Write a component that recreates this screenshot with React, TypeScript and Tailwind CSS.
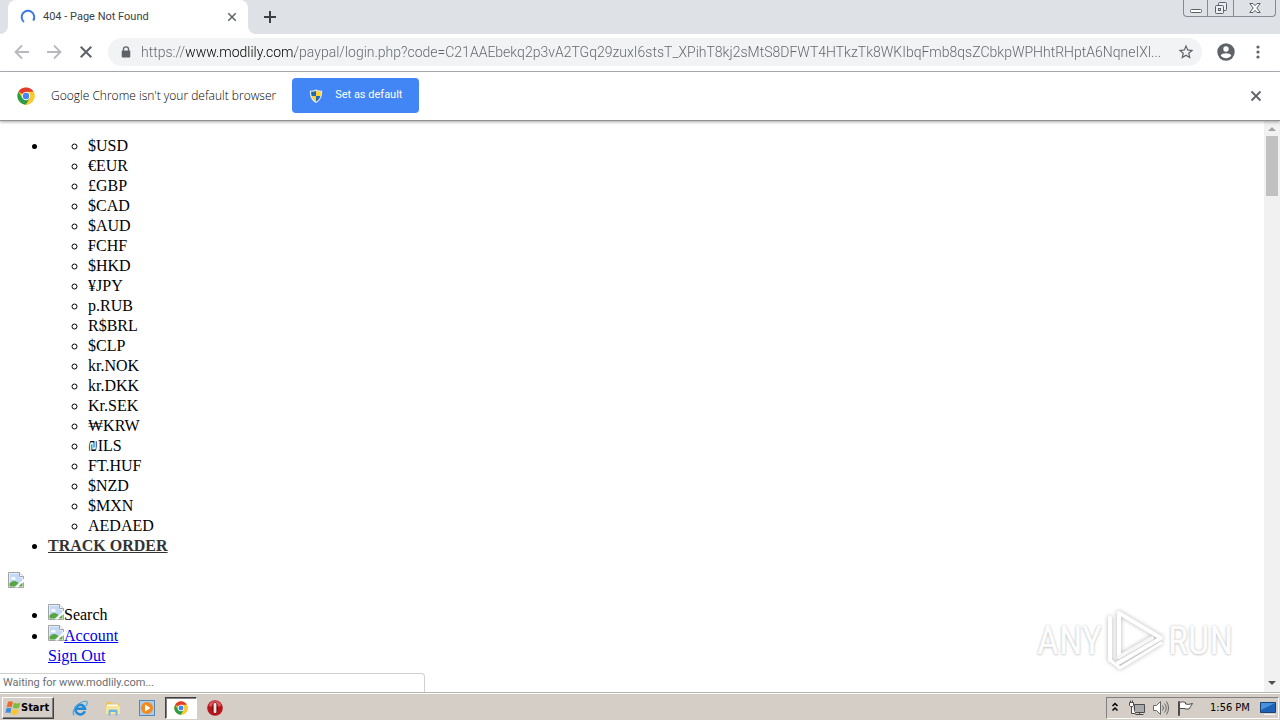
import React from "react";

const currencies = [
  "$USD", "€EUR", "£GBP", "$CAD", "$AUD", "₣CHF", "$HKD", "¥JPY", "p.RUB", "R$BRL",
  "$CLP", "kr.NOK", "kr.DKK", "Kr.SEK", "₩KRW", "₪ILS", "FT.HUF", "$NZD", "$MXN", "AEDAED",
];

const address =
  "https://www.modlily.com/paypal/login.php?code=C21AAEbekq2p3vA2TGq29zuxI6stsT_XPihT8kj2sMtS8DFWT4HTkzTk8WKIbqFmb8qsZCbkpWPHhtRHptA6NqneIXl...";

function ChromeLogo({ className }: { className: string }) {
  return (
    <svg viewBox="0 0 48 48" className={className} aria-hidden="true">
      <circle cx="24" cy="24" r="23" fill="#fbc116" />
      <path d="M24 24 4.1 12.5A23 23 0 0 1 43.9 12.5H24z" fill="#e33b2e" />
      <path d="M4.1 12.5A23 23 0 0 0 24 47L34 29.7 24 24 14 29.7z" fill="#2a9d48" />
      <path d="M24 13.5h20.5A23 23 0 0 1 24 47l10-17.3z" fill="#fcc934" />
      <circle cx="24" cy="24" r="11" fill="#fff" />
      <circle cx="24" cy="24" r="8.5" fill="#4285f4" />
    </svg>
  );
}

function Cross({ className }: { className: string }) {
  return (
    <svg viewBox="0 0 12 12" className={className} fill="none" stroke="currentColor" aria-hidden="true">
      <path d="M1.5 1.5l9 9M10.5 1.5l-9 9" strokeWidth="1.8" />
    </svg>
  );
}

function BrokenImage({ className }: { className: string }) {
  return (
    <svg viewBox="0 0 16 16" className={className} aria-hidden="true">
      <path d="M.5.5h11l4 4v11H.5z" fill="#fff" stroke="#a3a3a3" />
      <path d="M1.5 1.5h9.500v4h3.500v3L8 14.500H1.500z" fill="#c3d9f5" />
      <path d="M3 6.500c0-1 1-1.500 1.700-1 .5-1.200 2.300-.8 2.300.5 1 0 1 1.500 0 1.500H4C3.300 7.500 3 7 3 6.500z" fill="#fff" />
      <path d="M1.500 14.500v-3C4 8.500 7 8 10.500 11L7 14.500z" fill="#57a641" />
      <path d="M16 6.500 7 15.500h3L16 10z" fill="#fff" />
      <path d="M10.500 14.500l4-4v4z" fill="#57a641" />
      <path d="M11.500.5v4h4" fill="#fff" stroke="#a3a3a3" />
    </svg>
  );
}

function Shield() {
  return (
    <svg viewBox="0 0 16 16" className="size-[14px] shrink-0" aria-hidden="true">
      <path d="M8 .3C6 1.800 3.500 2.100 1 1.800.7 8 2.300 13.200 8 16c5.700-2.800 7.300-8 7-14.200C12.500 2.100 10 1.800 8 .3z" fill="#dfe7ee" />
      <path d="M8.200 2C6 3 4.500 3.300 2.400 3.200c0 1.800.1 3.300.6 4.800h5.200z" fill="#1f68b4" />
      <path d="M8 2c2 1 3.500 1.300 5.600 1.200 0 1.800-.1 3.300-.6 4.800H8z" fill="#fdd12f" />
      <path d="M3 8c.8 2.900 2.200 4.900 5 6.400V8z" fill="#fdd12f" />
      <path d="M13 8c-.8 2.900-2.200 4.900-5 6.400V8z" fill="#1f68b4" />
    </svg>
  );
}

function TabStrip() {
  return (
    <header className="flex h-[34px] shrink-0 bg-[#dee1e6]">
      <div className="flex w-2 shrink-0 items-end bg-white">
        <div className="h-full w-full rounded-br-lg bg-[#dee1e6]" />
      </div>
      <div role="tab" aria-selected="true" className="flex w-60 items-center rounded-t-lg bg-white pl-3 pr-2.5">
        <svg viewBox="0 0 16 16" className="size-4 shrink-0" fill="none" stroke="#3b78e7" strokeWidth="2" aria-hidden="true">
          <path d="M3.900 12.900A6.300 6.300 0 1 1 13.200 11.600" />
        </svg>
        <span className="ml-[7px] flex-1 text-[11px] text-[#3c4043]">404 - Page Not Found</span>
        <button aria-label="Close tab" className="flex size-3 items-center justify-center text-[#5f6368]">
          <Cross className="size-2.5" />
        </button>
      </div>
      <div className="flex w-2 shrink-0 bg-white">
        <div className="h-full w-full rounded-bl-lg bg-[#dee1e6]" />
      </div>
      <button aria-label="New tab" className="ml-1 flex w-5 items-center justify-center text-[#3c4043]">
        <svg viewBox="0 0 12 12" className="size-3" stroke="currentColor" strokeWidth="2" aria-hidden="true">
          <path d="M6 0v12M0 6h12" />
        </svg>
      </button>
      <div className="ml-auto mr-1 flex h-[17px] divide-x divide-[#858a93] rounded-b border border-t-0 border-[#858a93] text-[#5a5f68]">
        <button aria-label="Minimize" className="flex w-6 items-center justify-center">
          <svg viewBox="0 0 12 12" className="size-3" fill="#fff" stroke="currentColor" aria-hidden="true">
            <rect x=".5" y="7.500" width="11" height="3" rx="1" />
          </svg>
        </button>
        <button aria-label="Restore" className="flex w-[26px] items-center justify-center">
          <svg viewBox="0 0 14 14" className="size-3.5" fill="#eceef1" stroke="currentColor" aria-hidden="true">
            <rect x="4.500" y="1.500" width="8" height="8" rx="1" />
            <rect x="1.500" y="4.500" width="8" height="8" rx="1" />
            <rect x="4.500" y="7.500" width="2" height="2" />
          </svg>
        </button>
        <button aria-label="Close" className="flex w-[41px] items-center justify-center">
          <svg viewBox="0 0 12 12" className="size-3" fill="#fff" stroke="currentColor" aria-hidden="true">
            <path d="M.8 1.500h3.200l2 2.200 2-2.200h3.200L7.800 6l3.400 4.500H8L6 8.300 4 10.500H.8L4.200 6z" />
          </svg>
        </button>
      </div>
    </header>
  );
}

function Toolbar() {
  return (
    <nav className="flex h-[38px] shrink-0 items-center border-b border-[#b0b2b5] bg-white pb-px pl-[14px] pr-[14px] text-[#5f6368]">
      <button aria-label="Back" className="flex size-4 items-center justify-center text-[#b7b9bc]">
        <svg viewBox="0 0 16 16" className="size-4" fill="none" stroke="currentColor" strokeWidth="1.800" aria-hidden="true">
          <path d="M15 8H2M8 1.500 1.500 8 8 14.500" />
        </svg>
      </button>
      <button aria-label="Forward" className="ml-4 flex size-4 items-center justify-center text-[#b7b9bc]">
        <svg viewBox="0 0 16 16" className="size-4" fill="none" stroke="currentColor" strokeWidth="1.800" aria-hidden="true">
          <path d="M1 8h13M8 1.500 14.500 8 8 14.500" />
        </svg>
      </button>
      <button aria-label="Stop" className="ml-4 flex size-4 items-center justify-center">
        <Cross className="size-3.5" />
      </button>
      <div className="ml-[14px] flex h-7 min-w-0 flex-1 items-center rounded-full bg-[#f1f3f4] pl-[13px] pr-2">
        <svg viewBox="0 0 10 14" className="h-3 w-2.5 shrink-0" aria-hidden="true">
          <path d="M2 6V4a3 3 0 0 1 6 0v2" fill="none" stroke="#5f6368" strokeWidth="1.500" />
          <rect y="5.300" width="10" height="8" rx="1" fill="#5f6368" />
        </svg>
        <input
          aria-label="Address"
          defaultValue={address}
          className="ml-2.5 h-6 min-w-0 flex-1 bg-transparent bg-[linear-gradient(90deg,#5f6368_45px,#000_45px,#000_154px,#5f6368_154px)] bg-clip-text text-[14px] font-light text-transparent outline-none"
        />
        <button aria-label="Bookmark this page" className="ml-1 flex size-4 items-center justify-center">
          <svg viewBox="0 0 24 24" className="size-[18px] shrink-0" fill="currentColor" aria-hidden="true">
            <path d="M22 9.240l-7.190-.62L12 2 9.190 8.630 2 9.240l5.460 4.730L5.820 21 12 17.270 18.180 21l-1.630-7.030L22 9.240zM12 15.400l-3.760 2.270 1-4.280-3.320-2.880 4.380-.38L12 6.100l1.710 4.040 4.380.38-3.320 2.880 1 4.280L12 15.400z" />
          </svg>
        </button>
      </div>
      <button aria-label="Profile" className="ml-[15px] flex size-[18px] items-center justify-center">
        <svg viewBox="0 0 18 18" className="size-[18px]" aria-hidden="true">
          <circle cx="9" cy="9" r="8.700" fill="#5f6368" />
          <circle cx="9" cy="6" r="2.700" fill="#fff" />
          <path d="M3.700 12.500c1.200-3 9.400-3 10.600 0-2.500 3.600-8.100 3.600-10.600 0z" fill="#fff" />
        </svg>
      </button>
      <button aria-label="Menu" className="ml-[15px] flex w-4 items-center justify-center">
        <svg viewBox="0 0 4 14" className="h-3.5 w-1" fill="currentColor" aria-hidden="true">
          <circle cx="2" cy="2" r="1.600" />
          <circle cx="2" cy="7" r="1.600" />
          <circle cx="2" cy="12" r="1.600" />
        </svg>
      </button>
    </nav>
  );
}

function DefaultBrowserBar() {
  return (
    <div className="z-10 flex h-[49px] shrink-0 items-center border-b border-[#929292] bg-white pb-px pl-[17px] pr-[18px] shadow-[0_1px_3px_rgba(0,0,0,0.35)]">
      <ChromeLogo className="size-[18px]" />
      <p className="ml-4 font-['Open_Sans','Noto_Sans',sans-serif] text-[12px] font-light text-black">Google Chrome isn't your default browser</p>
      <button className="ml-4 flex h-[35px] w-[127px] items-center rounded bg-[#4285f4] pl-[17px] text-[11px] text-white">
        <Shield />
        <span className="ml-3 whitespace-nowrap">Set as default</span>
      </button>
      <button aria-label="Dismiss" className="ml-auto flex size-3 items-center justify-center text-[#5f6368]">
        <Cross className="size-3" />
      </button>
    </div>
  );
}

function Watermark() {
  return (
    <div className="absolute bottom-[18px] right-[47px] flex items-center font-['Roboto_Condensed','Roboto',sans-serif] text-[38px] leading-none text-[#fdfdfd] [text-shadow:0_0_3px_#c8c8c8,0_1px_2px_#d8d8d8]">
      <span>ANY</span>
      <svg viewBox="0 0 66 66" className="h-[66px] w-[66px]" fill="none" aria-hidden="true">
        <g className="drop-shadow-[0_0_2px_rgba(0,0,0,0.3)]" stroke="#fff" strokeWidth="4" strokeLinejoin="round" strokeLinecap="round">
          <path d="M8 10v42" />
          <path d="M17 49V5l42 25-43 25" />
          <path d="M17 49l33-19" stroke="#f6f6f6" />
          <path d="M8 52l10 8 41-25" strokeWidth="3" />
        </g>
      </svg>
      <span>RUN</span>
    </div>
  );
}

function Page() {
  return (
    <div className="relative flex min-h-0 flex-1 bg-white">
      <main className="min-w-0 flex-1 overflow-hidden px-2 pt-[15px] font-['Liberation_Serif',serif] text-[16px] leading-5 text-black">
        <ul className="list-disc pl-10">
          <li>
            <ul className="list-[circle] pl-10">
              {currencies.map((c) => (
                <li key={c}>{c}</li>
              ))}
            </ul>
          </li>
          <li>
            <a href="#track" className="font-bold text-[#333] underline">TRACK ORDER</a>
          </li>
        </ul>
        <BrokenImage className="mt-4 size-4" />
        <ul className="mt-4 list-disc pl-10">
          <li className="h-[21px]">
            <BrokenImage className="inline-block size-4 align-baseline" />Search
          </li>
          <li>
            <a href="#account" className="text-[#0000ee] underline">
              <BrokenImage className="inline-block size-4 align-baseline" />Account
            </a>
            <br />
            <a href="#signout" className="text-[#0000ee] underline">Sign Out</a>
          </li>
        </ul>
      </main>
      <div className="flex w-4 shrink-0 flex-col items-center bg-[#f1f1f1]" aria-hidden="true">
        <svg viewBox="0 0 16 15" className="h-[15px] w-4 shrink-0"><path d="M4 10h8L8 6z" fill="#a3a3a3" /></svg>
        <div className="h-[60px] w-3 bg-[#c1c1c1]" />
        <svg viewBox="0 0 16 16" className="mt-auto size-4 shrink-0"><path d="M4 5h8l-4 4z" fill="#505050" /></svg>
      </div>
      <Watermark />
      <div className="absolute bottom-0 left-0 flex h-[19px] w-[425px] items-center rounded-tr border-r border-t border-[#d0d0d0] bg-white pl-[3px] text-[11px] text-[#6b6e72]">
        Waiting for www.modlily.com...
      </div>
    </div>
  );
}

function Taskbar() {
  return (
    <footer className="flex h-7 shrink-0 items-center border-t border-[#b8b5ae] bg-[#d4cec6] pr-px font-['DejaVu_Sans_Condensed','DejaVu_Sans',sans-serif] text-[11px] text-black shadow-[inset_0_1px_0_#fff]">
      <button className="ml-0.5 mt-0.5 flex h-[22px] w-[52px] items-center whitespace-nowrap border border-b-[#404040] border-l-white border-r-[#404040] border-t-white pl-0.5 font-bold shadow-[inset_-1px_-1px_0_#808080]">
        <svg viewBox="0 0 16 16" className="size-4 shrink-0" aria-hidden="true">
          <path d="M3 2c2-1 3.500-.8 5 .2L6.700 7.300C5 6.500 3.500 6.500 1.700 7.300z" fill="#ee6a2a" />
          <path d="M9 2.700c2 1 4 1 6.300 0L14 7.800c-2 1-4 .9-6.200-.1z" fill="#7dbb42" />
          <path d="M1.400 8.300c2-.9 3.500-.8 5.100.1L5.300 13.300c-1.500-1-3-1.100-5-.2z" fill="#3f8ede" />
          <path d="M7.500 8.900c2 1 4 1 6.200 0l-1.300 5c-2 1-4 1-6.200 0z" fill="#fbc52d" />
        </svg>
        <span className="leading-4">Start</span>
      </button>
      <div className="ml-[18px] mt-0.5 flex items-center">
        <button aria-label="Internet Explorer" className="size-4">
          <svg viewBox="0 0 16 16" className="size-4" fill="none" aria-hidden="true">
            <path d="M12.800 11.300A4.800 4.800 0 1 1 13 8.700H4.500" stroke="#2189d9" strokeWidth="2.600" />
            <path d="M2.500 15C-1.500 13.500 4 4 11.500 1.500c5-1.300 4 2.500 2.500 4.500" stroke="#4aa3e0" strokeWidth="1.200" />
          </svg>
        </button>
        <button aria-label="Windows Explorer" className="ml-[17px] size-4">
          <svg viewBox="0 0 16 16" className="size-4" aria-hidden="true">
            <path d="M1 2h5l1 1.500h7V14H1z" fill="#e8c561" />
            <path d="M2 4.500h11v4H2z" fill="#fff" />
            <path d="M1 6h14v8H1z" fill="#f8e59b" />
            <path d="M3.500 15.500V11a1.500 1.500 0 0 1 1.500-1.500h6a1.500 1.500 0 0 1 1.500 1.500v4.500h-2v-3.500h-5v3.500z" fill="#6fb5e2" />
          </svg>
        </button>
        <button aria-label="Media Player" className="ml-[18px] size-4">
          <svg viewBox="0 0 16 16" className="size-4" aria-hidden="true">
            <rect x=".5" y=".5" width="15" height="15" fill="#a9cdea" stroke="#5587b5" />
            <circle cx="8" cy="8" r="6" fill="#f4891f" />
            <path d="M6 4.500v7L11.500 8z" fill="#fff" />
          </svg>
        </button>
        <button aria-label="Google Chrome" className="ml-2.5 flex h-[22px] w-8 items-center justify-center border border-b-white border-l-[#404040] border-r-white border-t-[#404040] bg-white shadow-[inset_1px_1px_0_#808080]">
          <ChromeLogo className="size-3.5" />
        </button>
        <button aria-label="Opera" className="ml-2.5 size-4">
          <svg viewBox="0 0 16 16" className="size-4" aria-hidden="true">
            <circle cx="8" cy="8" r="7.800" fill="#b5151b" />
            <path d="M1.500 5.500a7 7 0 0 1 13 0c-4 2-9 2-13 0z" fill="#d9565a" />
            <ellipse cx="8" cy="8" rx="3" ry="5.800" fill="#7c0a0e" />
            <rect x="6.600" y="3" width="2.800" height="10" rx="1" fill="#f4e6e6" />
          </svg>
        </button>
      </div>
      <div className="ml-auto mt-0.5 flex h-[22px] w-[173px] items-center border border-b-white border-l-[#808080] border-r-white border-t-[#808080] pl-1">
        <button aria-label="Show hidden icons" className="flex h-3 w-2 items-start">
          <svg viewBox="0 0 8 10" className="h-2.5 w-2" fill="none" stroke="#000" strokeWidth="1.500" aria-hidden="true">
            <path d="M1.500 4 4 1.500 6.500 4M1.500 8.500 4 6l2.500 2.500" />
          </svg>
        </button>
        <svg viewBox="0 0 16 16" className="ml-[10px] size-4" fill="#fff" stroke="#4b4b4b" aria-hidden="true">
          <path d="M5.500 4.500h10v8h-10z" fill="#aaa" />
          <path d="M6.500 14.500h8M10.500 12.500v2M2.500 5.500v8h4" />
          <path d="M.5 2.500h4v3l-1 1h-2l-1-1zM1.500.5v2M3.500.5v2" />
        </svg>
        <svg viewBox="0 0 16 16" className="ml-2 size-4" fill="none" stroke="#666" aria-hidden="true">
          <path d="M.5 5.500h3l4-4v13l-4-4h-3z" fill="#fff" />
          <path d="M9.500 5.500q2 2.500 0 5M11.500 3.500q3.500 4.500 0 9M13.500 1.500q4 6.500 0 13" />
        </svg>
        <svg viewBox="0 0 16 16" className="ml-2 size-4" fill="#fff" stroke="#4b4b4b" aria-hidden="true">
          <path d="M1.500 1.500h1v14h-1z" />
          <path d="M2.500 2.500q3-1.500 6 0v1.500q3 1 7-.5-2 3-3.500 5.500h-4V8.500h-5.500z" />
        </svg>
        <time className="ml-[17px] flex-1 whitespace-nowrap leading-4">1:56 PM</time>
        <button aria-label="Show desktop" className="mr-0.5 size-4">
          <svg viewBox="0 0 16 16" className="size-4" aria-hidden="true">
            <path d="M.5 2.500h15v10H.5z" fill="#1d62b5" stroke="#174478" />
            <path d="M1 3h14L1 10z" fill="#4593dc" />
            <path d="M4 14h11v1H4z" fill="#f5f5f5" />
          </svg>
        </button>
      </div>
    </footer>
  );
}

export default function App() {
  return (
    <div className="flex h-screen flex-col overflow-hidden font-[Roboto,sans-serif]">
      <TabStrip />
      <Toolbar />
      <DefaultBrowserBar />
      <Page />
      <Taskbar />
    </div>
  );
}
